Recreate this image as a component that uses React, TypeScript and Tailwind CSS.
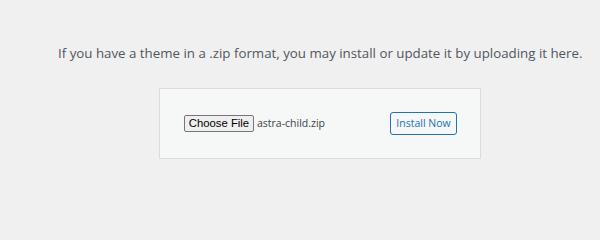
export default function App() {
  return (
    <div className="min-h-screen w-full bg-[#f0f0f1] font-['Open_Sans',sans-serif]">
      <p className="whitespace-nowrap pt-[44px] pl-[58px] text-[13.3px] leading-[18px] text-[#50575e]">
        If you have a theme in a .zip format, you may install or update it by uploading it here.
      </p>
      <div className="ml-[159px] mt-[26px] flex h-[71px] w-[322px] items-center border border-[#dcdcde] bg-[#f6f7f7] pl-[24px] pr-[23px]">
        <div className="flex items-center gap-[3px]">
          <span className="flex h-[17px] w-[70px] items-center justify-center rounded-[2px] border border-[#767676] bg-[#efefef] font-['Liberation_Sans',Arial,sans-serif] text-[11.3px] text-black">
            Choose File
          </span>
          <span className="text-[10.5px] text-[#3c434a]">astra-child.zip</span>
        </div>
        <button className="ml-auto flex h-[23px] w-[67px] items-center justify-center rounded-[3px] border border-[#2271b1] bg-[#f6f7f7] text-[10.5px] text-[#2271b1]">
          Install Now
        </button>
      </div>
    </div>
  );
}
